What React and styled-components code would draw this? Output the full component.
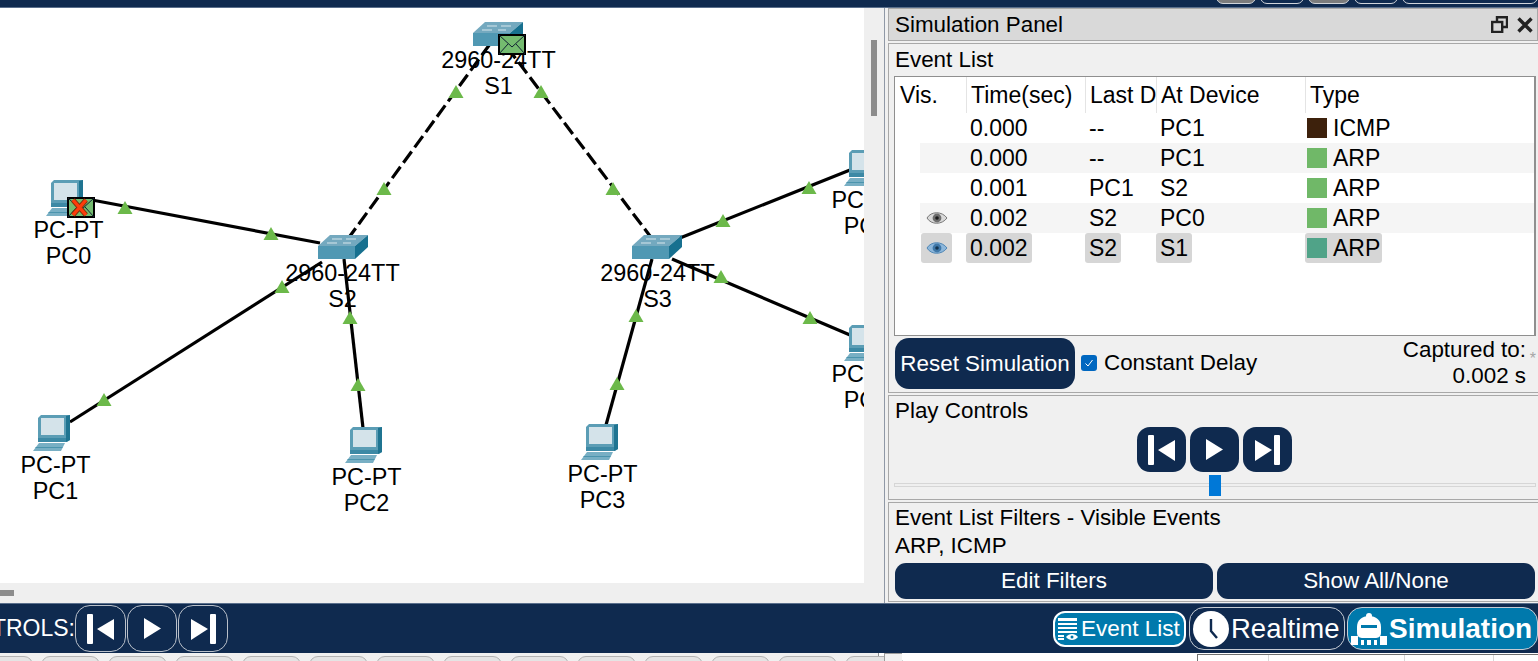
import React from 'react';
import styled, { createGlobalStyle } from 'styled-components';

const NAVY = '#0f2a4f';
const TEAL = '#0079ac';
const CANVAS_TOP = 8;

const GlobalStyle = createGlobalStyle`
    html, body {
        margin: 0;
        padding: 0;
        overflow: hidden;
        background: #f0f0f0;
    }
    * {
        box-sizing: border-box;
    }
    body {
        font-family: "Liberation Sans", Arial, sans-serif;
        font-size: 22.4px;
        color: #000;
    }
`;

const Page = styled.div`
    width: 1538px;
    height: 661px;
    display: flex;
    flex-direction: column;
    overflow: hidden;
`;

const TopBar = styled.div`
    height: 8px;
    flex: none;
    background: ${NAVY};
    border-bottom: 1px solid #5a6f8c;
    display: flex;
    justify-content: flex-end;
    align-items: flex-end;
    gap: 4px;
    overflow: hidden;
`;

const TopPill = styled.div`
    width: ${p => p.$w}px;
    height: 14px;
    margin-bottom: 3px;
    flex: none;
    border-radius: 8px;
    border: 1px solid #d0d4da;
    background: ${p => (p.$grey ? '#7c7c7c' : 'transparent')};
`;

const Main = styled.div`
    height: 595px;
    flex: none;
    display: flex;
`;

const Workspace = styled.div`
    width: 884px;
    flex: none;
    display: grid;
    grid-template-columns: 864px 20px;
    grid-template-rows: 575px 20px;
    background: #efefef;
`;

const Canvas = styled.div`
    position: relative;
    background: #fff;
    overflow: hidden;
`;

const LinkLayer = styled.svg`
    position: absolute;
    left: 0;
    top: 0;
`;

const Node = styled.div`
    position: absolute;
    width: 140px;
    display: flex;
    flex-direction: column;
    align-items: center;
    font-size: 23.4px;
    line-height: 26px;
    white-space: nowrap;
`;

const NodeIcon = styled.svg`
    position: absolute;
`;

const VScrollGutter = styled.div`
    padding: 32px 7px 0;
`;

const VThumb = styled.div`
    width: 6px;
    height: 76px;
    background: #8c8c8c;
`;

const HScrollGutter = styled.div`
    padding-top: 7px;
`;

const HThumb = styled.div`
    width: 14px;
    height: 6px;
    background: #8c8c8c;
`;

const Splitter = styled.div`
    width: 4px;
    flex: none;
    background: #f0f0f0;
    border-left: 1px solid #8f98a6;
`;

const Panel = styled.div`
    flex: 1;
    display: flex;
    flex-direction: column;
    background: #f0f0f0;
    min-width: 0;
`;

const PanelTitle = styled.div`
    height: 33px;
    flex: none;
    background: #d9d9d9;
    border: 1px solid #a8a8a8;
    display: flex;
    align-items: center;
    justify-content: space-between;
    padding: 2px 4px 0 6px;
    line-height: 1;
`;

const WindowIcons = styled.div`
    display: flex;
    align-items: center;
    gap: 9px;
    margin-top: -2px;
`;

const Group = styled.div`
    height: ${p => p.$h}px;
    flex: none;
    margin-top: 2px;
    border: 1px solid #a8a8a8;
    border-right-width: 0;
    display: flex;
    flex-direction: column;
`;

const GroupTitle = styled.div`
    line-height: 26px;
    padding: ${p => p.$pt}px 0 0 6px;
    flex: none;
`;

const EventTable = styled.div`
    width: 642px;
    height: 260px;
    margin: 3px 0 0 5px;
    flex: none;
    background: #fff;
    border: 2px solid #8f8f8f;
    border-width: 1px 2px 1px 1px;
    font-size: 23px;
`;

const Row = styled.div`
    display: grid;
    grid-template-columns: 71px 119px 71px 149px 1fr;
    height: ${p => (p.$head ? 36 : 30)}px;
    align-items: stretch;
`;

const Head = styled.div`
    display: flex;
    align-items: center;
    padding-left: ${p => (p.$first ? 5 : 4)}px;
    overflow: hidden;
    white-space: nowrap;
    border-left: ${p => (p.$first ? 'none' : '1px solid #e4e4e4')};
`;

const Cell = styled.div`
    display: flex;
    align-items: center;
    padding-left: 4px;
    background: ${p => (p.$stripe ? '#f5f5f5' : 'transparent')};
    white-space: nowrap;
`;

const Chip = styled.div`
    display: inline-flex;
    align-items: center;
    gap: 6px;
    height: 30px;
    margin-left: ${p => p.$ml ?? -4}px;
    padding: 0 ${p => p.$px ?? 4}px;
    border-radius: 3px;
    background: ${p => (p.$on ? '#d6d6d6' : 'transparent')};
`;

const EyeCell = styled(Cell)`
    padding-left: 26px;
    background: ${p => (p.$stripe ? 'linear-gradient(90deg, #fff 25px, #f5f5f5 25px)' : 'transparent')};
`;

const EyeChip = styled.div`
    width: 31px;
    height: 30px;
    display: flex;
    align-items: center;
    justify-content: center;
    border-radius: 3px;
    background: ${p => (p.$on ? '#d6d6d6' : 'transparent')};
`;

const Swatch = styled.span`
    width: 20px;
    height: 20px;
    flex: none;
    background: ${p => p.$color};
`;

const ResetRow = styled.div`
    display: flex;
    align-items: flex-start;
    padding: 2px 5px 0 6px;
    flex: 1;
`;

const NavyButton = styled.button`
    border: none;
    padding: 0;
    font: inherit;
    color: #fff;
    background: ${NAVY};
`;

const ResetButton = styled(NavyButton)`
    width: 180px;
    height: 51px;
    border-radius: 14px;
    flex: none;
`;

const DelayLabel = styled.label`
    display: flex;
    align-items: center;
    gap: 7px;
    margin: 12px 0 0 6px;
    line-height: 26px;
`;

const CheckMark = styled.span`
    width: 16px;
    height: 16px;
    border-radius: 3px;
    background: #0067c0;
    display: flex;
    align-items: center;
    justify-content: center;
`;

const Captured = styled.div`
    margin: -1px 7px 0 auto;
    text-align: right;
    line-height: 26px;
    position: relative;
`;

const Star = styled.span`
    position: absolute;
    right: -10px;
    top: 9px;
    font-size: 16px;
    color: #a6a6a6;
`;

const PlayButtons = styled.div`
    display: flex;
    justify-content: center;
    gap: 4px;
    margin-top: 3px;
    padding-left: 2px;
`;

const PlayButton = styled(NavyButton)`
    width: 49px;
    height: 45px;
    border-radius: 13px;
    display: flex;
    align-items: center;
    justify-content: center;
`;

const SliderTrack = styled.div`
    position: relative;
    height: 4px;
    margin: 11px 2px 0 5px;
    background: #efefef;
    border: 1px solid #d6d6d6;
`;

const SliderThumb = styled.div`
    position: absolute;
    left: 314px;
    top: -9px;
    width: 12px;
    height: 21px;
    background: #0078d7;
`;

const FilterButtons = styled.div`
    display: flex;
    gap: 4px;
    margin: 4px 3px 0 6px;
`;

const FilterButton = styled(NavyButton)`
    flex: 1;
    height: 36px;
    border-radius: 11px;
`;

const BottomBar = styled.div`
    height: 50px;
    flex: none;
    background: ${NAVY};
    border-top: 1px solid #5a6f8c;
    display: flex;
    align-items: center;
    color: #fff;
`;

const ClippedLabel = styled.div`
    width: 75px;
    flex: none;
    overflow: hidden;
    display: flex;
    justify-content: flex-end;
    white-space: nowrap;
    font-size: 23px;
`;

const ControlButton = styled.button`
    width: ${p => p.$w}px;
    height: 47px;
    margin-right: 1px;
    padding: 0;
    border: 1px solid #b9c0ca;
    border-radius: 15px;
    background: transparent;
    display: flex;
    align-items: center;
    justify-content: center;
`;

const ModeGroup = styled.div`
    margin-left: auto;
    display: flex;
    align-items: center;
    gap: 2px;
`;

const ModeButton = styled.button`
    width: ${p => p.$w}px;
    height: ${p => p.$h}px;
    margin-right: ${p => p.$mr ?? 0}px;
    padding: 0 0 0 ${p => p.$pl}px;
    border: ${p => p.$bw}px solid ${p => (p.$bw === 2 ? '#fff' : '#c6ccd4')};
    border-radius: ${p => p.$r}px;
    background: ${p => (p.$active ? TEAL : 'transparent')};
    color: #fff;
    font-family: inherit;
    font-size: ${p => p.$size}px;
    font-weight: ${p => (p.$bold ? 700 : 400)};
    display: flex;
    align-items: center;
    gap: ${p => p.$gap}px;
    white-space: nowrap;
`;

const BottomStrip = styled.div`
    flex: 1;
    display: flex;
    background: #fff;
    overflow: hidden;
`;

const TabRow = styled.div`
    width: 905px;
    flex: none;
    display: flex;
    gap: 8px;
    padding-top: 3px;
    margin-left: -26px;
    background: #f0f0f0;
    border-right: 1px solid #8f8f8f;
`;

const FakeTab = styled.div`
    width: 59px;
    height: 16px;
    flex: none;
    background: #e4e4e4;
    border: 1px solid #b4b4b4;
    border-radius: 9px 9px 0 0;
`;

const StripHandle = styled.div`
    width: 18px;
    margin-left: 5px;
    flex: none;
    background: #f2f2f2;
    border: 1px solid #9c9c9c;
    border-width: 1px 0 0 1px;
`;

const MiniTable = styled.div`
    margin: 1px 0 0 295px;
    flex: 1;
    display: grid;
    grid-template-columns: 70px 136px 89px 1fr;
    border: 1px solid #707070;
    border-bottom: none;
    border-right: none;
`;

const MiniCell = styled.div`
    border-left: ${p => (p.$first ? 'none' : '1px solid #d8d8d8')};
`;

const links = [
    { d: 'M92 200 L320 243' },
    { d: 'M490 44 L350 236', dashed: true },
    { d: 'M507 47 L650 236', dashed: true },
    { d: 'M322 262 L70 422' },
    { d: 'M344 259 L363 428' },
    { d: 'M652 259 L606 425' },
    { d: 'M680 238 L850 170' },
    { d: 'M672 259 L850 335' },
];

const lightPoints = [
    [125, 208], [271, 234], [384, 189], [456, 92], [541, 92], [613, 189],
    [282, 287], [104, 400], [350, 318], [358, 385], [636, 316], [617, 384],
    [723, 221], [809, 188], [721, 277], [810, 318],
];

const devices = [
    { kind: 'switch', x: 473, y: 22, cx: 498, labelY: 47, model: '2960-24TT', name: 'S1', packet: { x: 498, y: 34 } },
    { kind: 'pc', x: 46, y: 180, cx: 68, labelY: 217, model: 'PC-PT', name: 'PC0', packet: { x: 67, y: 197, failed: true } },
    { kind: 'switch', x: 318, y: 235, cx: 342, labelY: 260, model: '2960-24TT', name: 'S2' },
    { kind: 'switch', x: 632, y: 235, cx: 657, labelY: 260, model: '2960-24TT', name: 'S3' },
    { kind: 'pc', x: 33, y: 415, cx: 55, labelY: 452, model: 'PC-PT', name: 'PC1' },
    { kind: 'pc', x: 345, y: 427, cx: 366, labelY: 464, model: 'PC-PT', name: 'PC2' },
    { kind: 'pc', x: 581, y: 424, cx: 602, labelY: 461, model: 'PC-PT', name: 'PC3' },
    { kind: 'pc', x: 844, y: 150, cx: 866, labelY: 187, model: 'PC-PT', name: 'PC4' },
    { kind: 'pc', x: 844, y: 325, cx: 866, labelY: 361, model: 'PC-PT', name: 'PC5' },
];

const events = [
    { time: '0.000', last: '--', at: 'PC1', color: '#3d210c', type: 'ICMP' },
    { time: '0.000', last: '--', at: 'PC1', color: '#70b868', type: 'ARP', stripe: true },
    { time: '0.001', last: 'PC1', at: 'S2', color: '#70b868', type: 'ARP' },
    { time: '0.002', last: 'S2', at: 'PC0', color: '#70b868', type: 'ARP', stripe: true, eye: 'grey' },
    { time: '0.002', last: 'S2', at: 'S1', color: '#50a388', type: 'ARP', eye: 'blue', on: true },
];

const PcIcon = () => (
    <>
        <path d="M5 3 L8 0 L37 0 L37 25 L34 27 L5 27 Z" fill="#5b9db5" />
        <path d="M33 1 L37 0 L37 25 L33 27 Z" fill="#1f7491" />
        <rect x="8" y="3" width="23" height="17" fill="#d4e3ea" />
        <rect x="5" y="23" width="28" height="4" fill="#3c89a5" />
        <path d="M6 28 L32 28 L28 36 L0 36 Z" fill="#78afc4" />
        <path d="M3 32 L30 32 L29 33 L2 33 Z" fill="#4b94ad" />
    </>
);

const SwitchIcon = () => (
    <>
        <path d="M0 11 L12 0 L50 0 L37 11 Z" fill="#74a9bf" />
        <path d="M0 11 L37 11 L37 24 L0 24 Z" fill="#5098b3" />
        <path d="M37 11 L50 0 L50 12 L37 24 Z" fill="#17708f" />
        <path d="M14 4 L24 4 M28 4 L38 4 M9 8 L19 8 M25 8 L33 8" stroke="#d6e6ec" strokeWidth="1" />
    </>
);

const PacketIcon = ({ x, y, failed }) => (
    <NodeIcon style={{ left: x, top: y - CANVAS_TOP, zIndex: 3 }} width="28" height="21" viewBox="0 0 28 21">
        <rect x="1" y="1" width="26" height="19" fill="#74bb6f" stroke="#000" strokeWidth="2" />
        <path d="M1 1 L14 13 L27 1 M1 20 L10 10 M27 20 L18 10" fill="none" stroke="#123" strokeWidth="1" />
        {failed && <path d="M6 3 L19 18 M19 3 L6 18" stroke="#7a3410" strokeWidth="5" />}
        {failed && <path d="M6 3 L19 18 M19 3 L6 18" stroke="#ff3b0a" strokeWidth="3.4" />}
    </NodeIcon>
);

const Device = ({ device }) => (
    <>
        <NodeIcon
            style={{ left: device.x, top: device.y - CANVAS_TOP }}
            width={device.kind === 'pc' ? 38 : 50}
            height={device.kind === 'pc' ? 36 : 24}
        >
            {device.kind === 'pc' ? <PcIcon /> : <SwitchIcon />}
        </NodeIcon>
        {device.packet && <PacketIcon {...device.packet} />}
        <Node style={{ left: device.cx - 69.5, top: device.labelY - CANVAS_TOP }}>
            <span>{device.model}</span>
            <span>{device.name}</span>
        </Node>
    </>
);

const EyeIcon = ({ tone }) => (
    <svg width="22" height="16" viewBox="0 0 22 16">
        <path d="M1 8 C5 1 16 1 21 8 C16 15 5 15 1 8 Z" fill={tone === 'blue' ? '#8db7db' : '#d9d9d9'} stroke={tone === 'blue' ? '#4f86b5' : '#777'} />
        <circle cx="11" cy="8" r="4.4" fill={tone === 'blue' ? '#3f77a8' : '#6d6d6d'} />
        <circle cx="11" cy="8" r="1.8" fill={tone === 'blue' ? '#14344f' : '#1c1c1c'} />
    </svg>
);

const SkipBack = () => (
    <svg width="27" height="30" viewBox="0 0 27 30" fill="#fff">
        <rect x="0" y="0" width="6" height="30" rx="1" />
        <path d="M10 15 L27 5 L27 26 Z" />
    </svg>
);

const PlayGlyph = () => (
    <svg width="17" height="21" viewBox="0 0 17 21" fill="#fff">
        <path d="M0 0 L17 10.5 L0 21 Z" />
    </svg>
);

const SkipForward = () => (
    <svg width="25" height="30" viewBox="0 0 25 30" fill="#fff">
        <path d="M0 5 L17 15 L0 26 Z" />
        <rect x="19" y="0" width="6" height="30" rx="1" />
    </svg>
);

const ListIcon = () => (
    <svg width="20" height="24" viewBox="0 0 20 24" fill="#fff">
        <rect x="0" y="1" width="19" height="3" />
        <rect x="0" y="6" width="19" height="2" />
        <rect x="0" y="10" width="19" height="2" />
        <rect x="0" y="14" width="19" height="2" />
        <rect x="0" y="18" width="6" height="2" />
        <rect x="0" y="21" width="6" height="2" />
        <path d="M8 20 C11 16 17 16 20 20 C17 24 11 24 8 20 Z" />
        <circle cx="14" cy="20" r="1.5" fill={TEAL} />
    </svg>
);

const ClockIcon = () => (
    <svg width="36" height="36" viewBox="0 0 36 36">
        <circle cx="18" cy="18" r="18" fill="#fff" />
        <path d="M18 8 L18 20 L24 27" fill="none" stroke={NAVY} strokeWidth="2.4" />
    </svg>
);

const SimIcon = () => (
    <svg width="36" height="32" viewBox="0 0 36 32" fill="#fff">
        <circle cx="18" cy="3" r="3" />
        <path d="M6 14 C6 7 11 3 18 3 C25 3 30 7 30 14 L30 20 C30 24 27 25 24 25 L12 25 C9 25 6 24 6 20 Z" />
        <rect x="10" y="12" width="16" height="3" fill={TEAL} />
        <rect x="0" y="23" width="7" height="9" />
        <rect x="29" y="23" width="7" height="9" />
        <rect x="10" y="27" width="3" height="5" />
        <rect x="16" y="27" width="4" height="5" />
        <rect x="23" y="27" width="3" height="5" />
    </svg>
);

const DeviceLayer = () => (
    <>
        {devices.map(device => (
            <Device key={device.name} device={device} />
        ))}
    </>
);

const App = () => (
    <Page>
        <GlobalStyle />
        <TopBar>
            <TopPill $w={40} $grey />
            <TopPill $w={44} />
            <TopPill $w={42} $grey />
            <TopPill $w={44} />
            <TopPill $w={136} />
        </TopBar>
        <Main>
            <Workspace>
                <Canvas>
                    <LinkLayer width="864" height="575" viewBox={`0 ${CANVAS_TOP} 864 575`}>
                        {links.map(link => (
                            <path
                                key={link.d}
                                d={link.d}
                                stroke="#000"
                                strokeWidth="3.2"
                                fill="none"
                                strokeDasharray={link.dashed ? '14 5' : undefined}
                            />
                        ))}
                        {lightPoints.map(([x, y]) => (
                            <path key={`${x}-${y}`} d={`M${x} ${y - 7} L${x + 7.5} ${y + 6} L${x - 7.5} ${y + 6} Z`} fill="#6cb94a" />
                        ))}
                    </LinkLayer>
                    <DeviceLayer />
                </Canvas>
                <VScrollGutter>
                    <VThumb />
                </VScrollGutter>
                <HScrollGutter>
                    <HThumb />
                </HScrollGutter>
                <div />
            </Workspace>
            <Splitter />
            <Panel>
                <PanelTitle>
                    Simulation Panel
                    <WindowIcons>
                        <svg width="17" height="17" viewBox="0 0 17 17" fill="none" stroke="#222" strokeWidth="2.4">
                            <rect x="1.2" y="6" width="10" height="10" />
                            <path d="M6 6 L6 1.2 L16 1.2 L16 11 L11 11" />
                        </svg>
                        <svg width="16" height="16" viewBox="0 0 16 16" fill="none" stroke="#222" strokeWidth="3.4">
                            <path d="M1.5 1.5 L14.5 14.5 M14.5 1.5 L1.5 14.5" />
                        </svg>
                    </WindowIcons>
                </PanelTitle>
                <Group $h={350}>
                    <GroupTitle $pt={3}>Event List</GroupTitle>
                    <EventTable>
                        <Row $head>
                            <Head $first>Vis.</Head>
                            <Head>Time(sec)</Head>
                            <Head>Last D</Head>
                            <Head>At Device</Head>
                            <Head>Type</Head>
                        </Row>
                        {events.map(event => (
                            <Row key={`${event.time}-${event.at}`}>
                                <EyeCell $stripe={event.stripe}>
                                    <EyeChip $on={event.on}>
                                        {event.eye && <EyeIcon tone={event.eye} />}
                                    </EyeChip>
                                </EyeCell>
                                <Cell $stripe={event.stripe}>
                                    <Chip $on={event.on}>{event.time}</Chip>
                                </Cell>
                                <Cell $stripe={event.stripe}>
                                    <Chip $on={event.on}>{event.last}</Chip>
                                </Cell>
                                <Cell $stripe={event.stripe}>
                                    <Chip $on={event.on}>{event.at}</Chip>
                                </Cell>
                                <Cell $stripe={event.stripe}>
                                    <Chip $on={event.on} $ml={-4} $px={2}>
                                        <Swatch $color={event.color} />
                                        {event.type}
                                    </Chip>
                                </Cell>
                            </Row>
                        ))}
                    </EventTable>
                    <ResetRow>
                        <ResetButton type="button">Reset Simulation</ResetButton>
                        <DelayLabel>
                            <CheckMark>
                                <svg width="10" height="10" viewBox="0 0 10 10" fill="none" stroke="#fff" strokeWidth="1">
                                    <path d="M1.5 5.5 L4 8 L8.5 2" />
                                </svg>
                            </CheckMark>
                            Constant Delay
                        </DelayLabel>
                        <Captured>
                            Captured to:
                            <Star>*</Star>
                            <br />
                            0.002 s
                        </Captured>
                    </ResetRow>
                </Group>
                <Group $h={105}>
                    <GroupTitle $pt={2}>Play Controls</GroupTitle>
                    <PlayButtons>
                        <PlayButton type="button"><SkipBack /></PlayButton>
                        <PlayButton type="button"><PlayGlyph /></PlayButton>
                        <PlayButton type="button"><SkipForward /></PlayButton>
                    </PlayButtons>
                    <SliderTrack>
                        <SliderThumb />
                    </SliderTrack>
                </Group>
                <Group $h={100}>
                    <GroupTitle $pt={2}>Event List Filters - Visible Events</GroupTitle>
                    <GroupTitle $pt={2}>ARP, ICMP</GroupTitle>
                    <FilterButtons>
                        <FilterButton type="button">Edit Filters</FilterButton>
                        <FilterButton type="button">Show All/None</FilterButton>
                    </FilterButtons>
                </Group>
            </Panel>
        </Main>
        <BottomBar>
            <ClippedLabel>
                <span>PLAY CONTROLS:</span>
            </ClippedLabel>
            <ControlButton type="button" $w={51}><SkipBack /></ControlButton>
            <ControlButton type="button" $w={50}><PlayGlyph /></ControlButton>
            <ControlButton type="button" $w={50}><SkipForward /></ControlButton>
            <ModeGroup>
                <ModeButton type="button" $active $w={133} $h={36} $mr={1} $pl={3} $bw={2} $r={12} $size={22.5} $gap={3}>
                    <ListIcon />
                    Event List
                </ModeButton>
                <ModeButton type="button" $w={156} $h={43} $pl={3} $bw={1} $r={15} $size={27.5} $gap={2}>
                    <ClockIcon />
                    Realtime
                </ModeButton>
                <ModeButton type="button" $active $bold $w={191} $h={43} $pl={3} $bw={1} $r={15} $size={28} $gap={2}>
                    <SimIcon />
                    Simulation
                </ModeButton>
            </ModeGroup>
        </BottomBar>
        <BottomStrip>
            <TabRow>
                {Array.from({ length: 14 }, (_, i) => <FakeTab key={i} />)}
            </TabRow>
            <StripHandle />
            <MiniTable>
                <MiniCell $first />
                <MiniCell />
                <MiniCell />
                <MiniCell />
            </MiniTable>
        </BottomStrip>
    </Page>
);

export default App;
